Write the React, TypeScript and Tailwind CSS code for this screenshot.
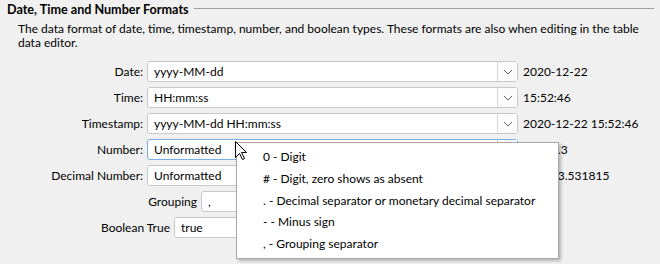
import React from 'react';

const Chevron = () => (
  <svg width="10" height="6" viewBox="0 0 10 6" className="block">
    <path d="M1 1 L5 5 L9 1" fill="none" stroke="#5f5f5f" strokeWidth="1" />
  </svg>
);

function Combo({ value, focused }: { value: string; focused?: boolean }) {
  return (
    <div
      className={`flex h-[21px] w-[371px] rounded-[3px] border bg-white ${
        focused ? 'border-[#7aaee6]' : 'border-[#c8c8c8]'
      }`}
    >
      <div className="flex flex-1 items-center pl-[6px] leading-none">{value}</div>
      <div
        className={`flex w-[20px] items-center justify-center border-l bg-[#fbfbfb] ${
          focused ? 'border-[#c8c8c8]' : 'border-[#d8d8d8]'
        }`}
      >
        <Chevron />
      </div>
    </div>
  );
}

function Field({ value, width }: { value: string; width: string }) {
  return (
    <div className={`flex h-[21px] ${width} items-center rounded-[3px] border border-[#c8c8c8] bg-white pl-[6px] leading-none`}>
      {value}
    </div>
  );
}

const rows = [
  { label: 'Date:', value: 'yyyy-MM-dd', sample: '2020-12-22' },
  { label: 'Time:', value: 'HH:mm:ss', sample: '15:52:46' },
  { label: 'Timestamp:', value: 'yyyy-MM-dd HH:mm:ss', sample: '2020-12-22 15:52:46' },
  { label: 'Number:', value: 'Unformatted', sample: '12345.3', focused: true },
  { label: 'Decimal Number:', value: 'Unformatted', sample: '123453.531815' },
];

const hints = [
  '0 - Digit',
  '# - Digit, zero shows as absent',
  '. - Decimal separator or monetary decimal separator',
  '- - Minus sign',
  ', - Grouping separator',
];

export default function App() {
  return (
    <div className="relative h-[264px] w-[660px] overflow-hidden bg-[#f0f0f0] font-['Lato',sans-serif] text-[12px] text-black">
      {/* group title */}
      <div className="flex items-start pl-[7px] pr-[6px]">
        <div className="text-[12.6px] font-bold leading-[20px]">Date, Time and Number Formats</div>
        <div className="ml-[5px] mt-[8px] h-px flex-1 bg-[#a0a0a0]" />
      </div>

      <div className="mt-[2px] whitespace-nowrap pl-[18px] leading-[14px]">
        The data format of date, time, timestamp, number, and boolean types. These formats are also when editing in the table
        <br />
        data editor.
      </div>

      <div className="mt-[11px] flex flex-col gap-[5px]">
        {rows.map((r) => (
          <div key={r.label} className="flex h-[21px] items-center">
            <div className="w-[147px] pr-[4px] text-right">{r.label}</div>
            <Combo value={r.value} focused={r.focused} />
            <div className="ml-[5px]">{r.sample}</div>
          </div>
        ))}
        <div className="flex h-[21px] items-center">
          <div className="w-[201px] pr-[4px] text-right">Grouping</div>
          <Field value="," width="w-[80px]" />
        </div>
        <div className="flex h-[21px] items-center">
          <div className="w-[174px] pr-[4px] text-right">Boolean True</div>
          <Field value="true" width="w-[200px]" />
        </div>
      </div>

      {/* format hint popup */}
      <div className="absolute left-[236px] top-[142px] flex h-[117px] w-[323px] flex-col border border-[#a8a8a8] bg-white pl-[26px] pt-[3px] leading-[21.75px] shadow-[2px_2px_3px_rgba(0,0,0,0.25)]">
        {hints.map((h) => (
          <div key={h}>{h}</div>
        ))}
      </div>

      {/* mouse cursor */}
      <svg className="absolute left-[235px] top-[141px]" width="13" height="20" viewBox="0 0 13 20">
        <path
          d="M0.5 0.5 L0.5 16.5 L4.5 12.5 L7.5 18.5 L9.5 17.5 L6.5 11.5 L11.5 11.5 Z"
          fill="white"
          stroke="black"
          strokeWidth="1"
          strokeLinejoin="miter"
        />
      </svg>
    </div>
  );
}
